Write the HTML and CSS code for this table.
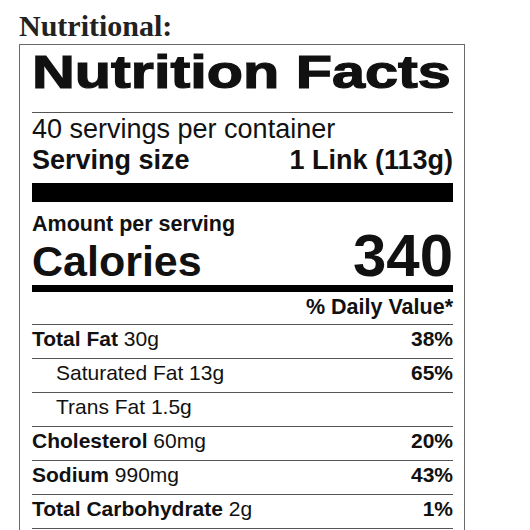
FILE: index.html
```html
<!DOCTYPE html>
<html lang="en">
<head>
  <meta charset="UTF-8" />
  <meta name="viewport" content="width=device-width, initial-scale=1.0"/>
  <title>Nutritional</title>
  <link rel="stylesheet" href="styles.css">
</head>
<body>
  <div class="page">
    <h2 class="caption">Nutritional:</h2>

    <div class="label">
      <h1 class="label-title"><span>Nutrition Facts</span></h1>
      <p class="servings">40 servings per container</p>
      <p class="serving-size"><span>Serving size</span><span>1 Link (113g)</span></p>

      <div class="bar-thick"></div>

      <p class="amount">Amount per serving</p>
      <div class="calories">
        <span class="cal-label">Calories</span>
        <span class="cal-value">340</span>
      </div>

      <div class="bar-medium"></div>

      <p class="dv-head">% Daily Value*</p>

      <ul class="nutrients">
        <li><span><b>Total Fat</b> 30g</span><b>38%</b></li>
        <li class="sub"><span>Saturated Fat 13g</span><b>65%</b></li>
        <li class="sub"><span>Trans Fat 1.5g</span></li>
        <li><span><b>Cholesterol</b> 60mg</span><b>20%</b></li>
        <li><span><b>Sodium</b> 990mg</span><b>43%</b></li>
        <li><span><b>Total Carbohydrate</b> 2g</span><b>1%</b></li>
      </ul>
    </div>
  </div>
</body>
</html>
```

FILE: styles.css
```css
body {
  margin: 0;
  background: #fff;
  color: #111;
  font-family: "Liberation Sans", Arial, sans-serif;
}
.page {
  padding: 9px 0 0 19px;
}
.caption {
  margin: 0 0 1px;
  font-family: "Liberation Serif", "Times New Roman", serif;
  font-weight: bold;
  font-size: 30px;
  line-height: 34px;
  color: #222;
}
.label {
  width: 446px;
  box-sizing: border-box;
  border: 1px solid #6a6a6a;
  padding: 4px 11px 20px 12px;
}
.label p {
  margin: 0;
}
.label-title {
  margin: 0;
  font-size: 46px;
  line-height: 46px;
  font-weight: bold;
  padding-bottom: 17px;
  border-bottom: 1px solid #555;
  white-space: nowrap;
}
.label-title span {
  display: inline-block;
  transform: scaleX(1.29);
  transform-origin: left center;
  -webkit-text-stroke: 1.2px #111;
}
.servings {
  margin-top: 1px !important;
  font-size: 27px;
  line-height: 30px;
}
.serving-size {
  margin-top: 1px !important;
  display: flex;
  justify-content: space-between;
  font-size: 27px;
  line-height: 30px;
  font-weight: bold;
}
.bar-thick {
  height: 19px;
  margin-top: 8px;
  background: #000;
}
.amount {
  margin-top: 10px !important;
  font-size: 21.5px;
  line-height: 24px;
  font-weight: bold;
}
.calories {
  display: flex;
  justify-content: space-between;
  align-items: baseline;
  font-weight: bold;
}
.cal-label {
  font-size: 43px;
  line-height: 40px;
}
.cal-value {
  font-size: 60px;
  line-height: 40px;
}
.bar-medium {
  height: 7px;
  margin-top: 4px;
  background: #000;
}
.dv-head {
  text-align: right;
  font-size: 21.5px;
  line-height: 24px;
  font-weight: bold;
  padding: 3px 0 5px;
  border-bottom: 1px solid #555;
}
.nutrients {
  list-style: none;
  margin: 0;
  padding: 0;
}
.nutrients li {
  display: flex;
  justify-content: space-between;
  font-size: 21px;
  line-height: 28px;
  padding-bottom: 5px;
  border-bottom: 1px solid #555;
}
.nutrients li.sub {
  padding-left: 24px;
}
```
